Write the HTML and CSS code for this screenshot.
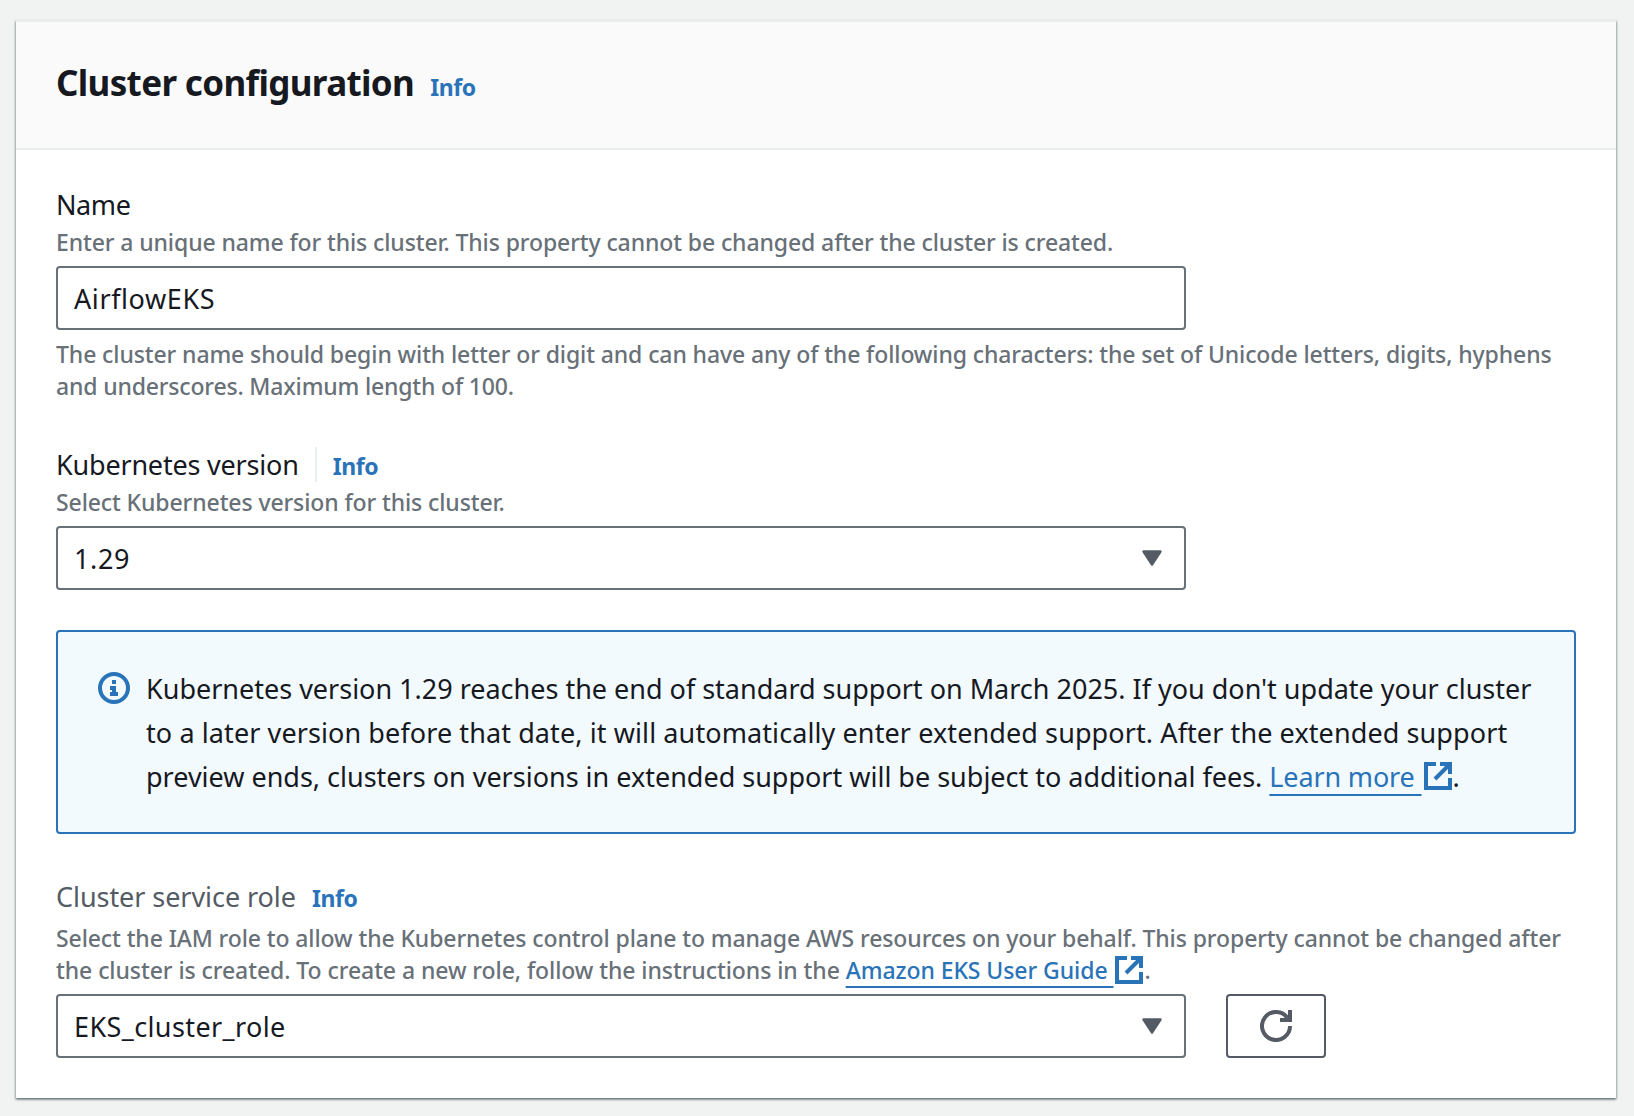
FILE: index.html
```html
<!DOCTYPE html>
<html lang="en">
<head>
<meta charset="utf-8">
<title>Cluster configuration</title>
<link rel="stylesheet" href="styles.css">
</head>
<body>
<main class="panel">
  <header class="panel-header">
    <h2 class="title">Cluster configuration</h2>
    <a class="info">Info</a>
  </header>
  <div class="panel-body">
    <section class="field">
      <div class="label-row"><label class="label label-name" for="name">Name</label></div>
      <p class="hint">Enter a unique name for this cluster. This property cannot be changed after the cluster is created.</p>
      <input class="control input" id="name" value="AirflowEKS">
      <p class="hint constraint">The cluster name should begin with letter or digit and can have any of the following characters: the set of Unicode letters, digits, hyphens<br><span class="constraint-end">and underscores. Maximum length of 100.</span></p>
    </section>

    <section class="field field-version">
      <div class="label-row">
        <span class="label label-version">Kubernetes version</span>
        <span class="divider"></span>
        <a class="info">Info</a>
      </div>
      <p class="hint">Select Kubernetes version for this cluster.</p>
      <div class="control select">
        <span class="value-version">1.29</span>
        <svg class="caret" width="20" height="17" viewBox="0 0 20 17"><path d="M1.5 1.5h17L10 14.5z" fill="#545b64" stroke="#545b64" stroke-width="2.4" stroke-linejoin="round"/></svg>
      </div>
    </section>

    <div class="alert">
      <svg class="alert-icon" width="32" height="32" viewBox="0 0 32 32"><circle cx="16" cy="16" r="14" fill="none" stroke="#2973b8" stroke-width="4"/><path d="M14 8h4v4h-4zM12 14h6v6h2v4h-8v-4h2v-2h-2z" fill="#2973b8"/></svg>
      <p class="alert-text">Kubernetes version 1.29 reaches the end of standard support on March 2025. If you don't update your cluster<br><span class="alert-middle">to a later version before that date, it will automatically enter extended support. After the extended support</span><br>preview ends, clusters on versions in extended support will be subject to additional fees. <a class="link link-learn">Learn more&nbsp;</a><svg class="external" width="28" height="28" viewBox="0 0 28 28"><path d="M12 2H2v24h24V16M16 2h10v10M25 3L11 17" fill="none" stroke="#2973b8" stroke-width="4"/></svg><span>.</span></p>
    </div>

    <section class="field field-role">
      <div class="label-row">
        <span class="label label-muted">Cluster service role</span>
        <a class="info">Info</a>
      </div>
      <p class="hint hint-role">Select the IAM role to allow the Kubernetes control plane to manage AWS resources on your behalf. This property cannot be changed after<br><span class="role-end">the cluster is created. To create a new role, follow the instructions in the <a class="link">Amazon EKS User Guide&nbsp;</a></span><svg class="external" width="28" height="28" viewBox="0 0 28 28"><path d="M12 2H2v24h24V16M16 2h10v10M25 3L11 17" fill="none" stroke="#2973b8" stroke-width="4"/></svg><span>.</span></p>
      <div class="control-row">
        <div class="control select">
          <span class="value-role">EKS_cluster_role</span>
          <svg class="caret" width="20" height="17" viewBox="0 0 20 17"><path d="M1.5 1.5h17L10 14.5z" fill="#545b64" stroke="#545b64" stroke-width="2.4" stroke-linejoin="round"/></svg>
        </div>
        <button class="refresh" aria-label="Refresh"><svg width="32" height="32" viewBox="0 0 32 32"><path d="M30 16A14 14 0 1 1 27.5 8M30 0v10H20" fill="none" stroke="#545b64" stroke-width="4"/></svg></button>
      </div>
    </section>
  </div>
</main>
</body>
</html>
```
FILE: styles.css
```css
* { box-sizing: border-box; }

body {
  margin: 0;
  padding: 20px 18px 18px 16px;
  height: 1116px;
  overflow: hidden;
  background: #f1f3f3;
  color: #16191f;
  font: 400 27px/40px "Noto Sans", "Open Sans", sans-serif;
}

.panel {
  height: 1078px;
  background: #fff;
  border-top: 2px solid #eaeded;
  box-shadow: 0 2px 2px 0 rgba(0, 28, 36, .3), 1px 1px 2px 0 rgba(0, 28, 36, .25), -1px 1px 2px 0 rgba(0, 28, 36, .25);
}

.panel-header {
  display: flex;
  align-items: baseline;
  gap: 16px;
  height: 128px;
  padding: 39px 40px 0;
  background: #fafafa;
  border-bottom: 2px solid #eaeded;
}

.title {
  margin: 0;
  font-size: 35px;
  font-weight: 700;
  line-height: 44px;
  letter-spacing: -.65px;
}

.info {
  color: #2973b8;
  font-size: 23px;
  font-weight: 700;
  letter-spacing: -.4px;
}

.panel-body { padding: 34px 40px 40px; }

.label-row {
  display: flex;
  align-items: baseline;
  height: 40px;
  padding-top: 1px;
  gap: 16px;
}
.label-name { letter-spacing: -.4px; }
.label-version { letter-spacing: -.2px; }
.label-muted {
  color: #545b64;
  letter-spacing: -.06px;
}

.divider {
  align-self: flex-start;
  width: 2px;
  height: 35px;
  margin-top: 2px;
  background: #eaeded;
}

.hint {
  margin: 2px 0 8px;
  color: #687078;
  font-size: 23px;
  font-weight: 500;
  line-height: 32px;
  letter-spacing: -.106px;
  white-space: nowrap;
}
.constraint { margin: 8px 0 0; }
.constraint-end { letter-spacing: -.17px; }

.control {
  display: block;
  width: 1130px;
  height: 64px;
  border: 2px solid #687078;
  border-radius: 4px;
  background: #fff;
  color: #16191f;
  font: inherit;
}
.input {
  padding: 0 16px;
  letter-spacing: .6px;
}
.select {
  display: flex;
  align-items: center;
  justify-content: space-between;
  padding: 0 22px 0 16px;
}
.value-version,
.value-role { padding-top: 2px; }
.value-version { letter-spacing: .6px; }
.value-role { letter-spacing: .4px; }

.field-version { margin-top: 42px; }

.alert {
  display: flex;
  gap: 16px;
  height: 204px;
  margin-top: 40px;
  padding: 34px 40px;
  border: 2px solid #2973b8;
  border-radius: 4px;
  background: #f2fafd;
}
.alert-icon {
  flex: none;
  margin-top: 6px;
}
.alert-text {
  margin: 0;
  padding-top: 1px;
  line-height: 44px;
  letter-spacing: -.008px;
  white-space: nowrap;
}
.alert-middle { letter-spacing: .095px; }

.link {
  color: #2973b8;
  text-decoration: underline 2px;
  text-decoration-skip-ink: none;
  text-underline-offset: 7px;
}
.link-learn { letter-spacing: -.15px; }
.external {
  margin: 0 1px 0 2px;
  vertical-align: -3px;
}

.field-role { margin-top: 42px; }
.hint-role {
  height: 64px;
  margin-top: 6px;
  letter-spacing: -.1px;
}
.role-end { letter-spacing: -.07px; }
.hint-role .external { vertical-align: -5px; }

.control-row {
  display: flex;
  gap: 40px;
}
.refresh {
  display: flex;
  align-items: center;
  justify-content: center;
  width: 100px;
  height: 64px;
  padding: 0;
  border: 2px solid #545b64;
  border-radius: 4px;
  background: #fff;
}
```
